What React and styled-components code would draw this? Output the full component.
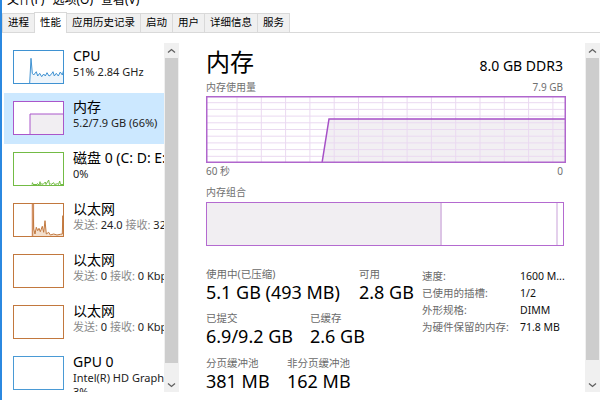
import React from 'react';
import styled, { createGlobalStyle } from 'styled-components';

const GlobalStyle = createGlobalStyle`
  *, *::before, *::after { box-sizing: border-box; }
  html, body { margin: 0; padding: 0; background: #fff; }
  body {
    font-family: "Noto Sans", "Noto Sans CJK SC", sans-serif;
    color: #000;
  }
`;

const Window = styled.div`
  width: 600px;
  height: 400px;
  border-left: 2px solid #2b88e0;
  background: #fff;
  overflow: hidden;
  display: flex;
  flex-direction: column;
`;

const MenuBar = styled.div`
  display: flex;
  gap: 8px;
  height: 13px;
  margin-top: -7px;
  padding-left: 5px;
  font-size: 12px;
  line-height: 13px;
`;

const TabBar = styled.div`
  display: flex;
  align-items: flex-end;
  height: 21px;
  margin-top: 6px;
  border-bottom: 1px solid #d9d9d9;
`;

const Tab = styled.div`
  height: ${p => (p.$active ? '21px' : '19px')};
  margin-bottom: ${p => (p.$active ? '-1px' : '0')};
  margin-right: -1px;
  padding: 0 5px;
  border: 1px solid #d9d9d9;
  border-bottom: none;
  background: ${p => (p.$active ? '#fff' : '#f0f0f0')};
  font-size: 10.5px;
  line-height: ${p => (p.$active ? '19px' : '17px')};
  color: #000;
  position: relative;
  z-index: ${p => (p.$active ? 1 : 0)};
`;

const Body = styled.div`
  flex: 1;
  min-height: 0;
  display: flex;
  padding-bottom: 8px;
`;

const LeftPane = styled.div`
  display: flex;
  margin-left: 2px;
  width: 180px;
`;

const List = styled.div`
  width: 160px;
  padding-top: 9px;
  overflow: hidden;
`;

const Item = styled.div`
  display: flex;
  gap: 9px;
  height: 51px;
  padding: 5px 0 0 9px;
  background: ${p => (p.$active ? '#cce8ff' : 'transparent')};
  white-space: nowrap;
  overflow: hidden;
`;

const ThumbSvg = styled.svg`
  flex-shrink: 0;
  margin-top: 3px;
  display: block;
`;

const ItemText = styled.div`
  display: flex;
  flex-direction: column;
`;

const ItemTitle = styled.div`
  font-size: 14px;
  line-height: 18px;
`;

const ItemSub = styled.div`
  font-size: 11px;
  line-height: 14px;
  color: #222;
`;

const Dim = styled.span`
  color: #8a8a8a;
`;

const Scroll = styled.div`
  width: 15px;
  margin-top: 10px;
  background: #f0f0f0;
  display: flex;
  flex-direction: column;
  flex-shrink: 0;
`;

const Arrow = styled.div`
  height: 15px;
  display: flex;
  align-items: center;
  justify-content: center;
`;

const Track = styled.div`
  flex: 1;
  display: flex;
  flex-direction: column;
  padding-bottom: ${p => p.$rest}px;
`;

const ScrollThumb = styled.div`
  flex: 1;
  margin: 0 1px;
  background: #cdcdcd;
`;

const RightPane = styled.div`
  flex: 1;
  display: flex;
  margin-left: 8px;
  min-width: 0;
`;

const Content = styled.div`
  flex: 1;
  padding: 14px 21px 0 14px;
  overflow: hidden;
`;

const Header = styled.div`
  display: flex;
  justify-content: space-between;
  align-items: baseline;
  height: 30px;
`;

const Title = styled.div`
  font-size: 24px;
  line-height: 30px;
`;

const HeaderInfo = styled.div`
  font-size: 14px;
  line-height: 18px;
  padding-right: 1px;
`;

const CaptionRow = styled.div`
  display: flex;
  justify-content: space-between;
  font-size: 10px;
  line-height: 14px;
  color: #707070;
  margin-top: ${p => p.$top}px;
  margin-bottom: ${p => p.$bottom}px;
  padding-right: 1px;
`;

const Bar = styled.div`
  display: flex;
  height: 44px;
  border: 1.5px solid #b46ad0;
`;

const Segment = styled.div`
  width: ${p => (p.$w ? `${p.$w}px` : 'auto')};
  flex: ${p => (p.$w ? '0 0 auto' : '1')};
  background: ${p => p.$bg};
  border-right: ${p => (p.$line ? `2px solid ${p.$line}` : 'none')};
`;

const StatsArea = styled.div`
  display: flex;
  margin-top: 21px;
`;

const StatsCol = styled.div`
  width: 216px;
  flex-shrink: 0;
`;

const StatRow = styled.div`
  display: flex;
  margin-bottom: ${p => p.$gap}px;
`;

const Stat = styled.div`
  width: ${p => (p.$w ? `${p.$w}px` : 'auto')};
  flex-shrink: 0;
`;

const StatLabel = styled.div`
  font-size: 10.5px;
  line-height: 14px;
  color: #6a6a6a;
  white-space: nowrap;
`;

const StatValue = styled.div`
  font-size: 18px;
  line-height: 22px;
  white-space: nowrap;
`;

const Table = styled.div`
  display: grid;
  grid-template-columns: 98px auto;
  margin-top: 1px;
  font-size: 10.5px;
  line-height: 17px;
  align-content: start;
`;

const Key = styled.div`
  color: #6a6a6a;
  white-space: nowrap;
`;

const Val = styled.div`
  color: #111;
  white-space: nowrap;
`;

function Chevron({ down }) {
  return (
    <svg width="9" height="6" viewBox="0 0 9 6">
      <polyline
        points={down ? '1,1.5 4.5,4.5 8,1.5' : '1,4.5 4.5,1.5 8,4.5'}
        fill="none"
        stroke="#606060"
        strokeWidth="1.3"
      />
    </svg>
  );
}

function Scrollbar({ rest }) {
  return (
    <Scroll>
      <Arrow><Chevron /></Arrow>
      <Track $rest={rest}>
        <ScrollThumb />
      </Track>
      <Arrow><Chevron down /></Arrow>
    </Scroll>
  );
}

function Thumb({ color, line, area, fill, band }) {
  return (
    <ThumbSvg width="51" height="34" viewBox="0 0 51 34">
      <rect x="0" y="0" width="51" height="34" fill="#fff" />
      {band && <rect x={band[0]} y="0" width={band[1]} height="34" fill="#f6d2c4" />}
      {area && <polygon points={area} fill={fill} />}
      {line && <polyline points={line} fill="none" stroke={color} strokeWidth="1" />}
      <rect x="0.5" y="0.5" width="50" height="33" fill="none" stroke={color} />
    </ThumbSvg>
  );
}

const cpuLine =
  '16.7,33 18,8.3 19.3,23.3 20.7,25 23.3,21.7 24.7,26 26.7,23.3 28.7,26.7 30.7,24 32.3,26 34,22.7 36,26 38,24.7 40,21.7 41.3,26 43.3,23.3 45.3,26 47.3,22 49.3,25 50.5,20.7';
const diskLine =
  '19,32.5 19.5,30.7 20,32.5 24,32.5 24.5,31.5 25,32.5 26.5,32.5 27,29.7 27.5,32.5 29,31.7 30,32.5 32.3,30 33,32.5 35.7,28 36.5,32.5 37.3,31.7 38,32.5 40.7,30.7 41.5,32.5 44.7,31.7 45.5,32.5 46.7,29 47.5,32.5 50.5,32.5';
const ethLine =
  '19.7,33 20,1 20.7,26 22,31 23.3,24.3 24.7,27.7 26,25.3 27.3,28.7 29.3,23.3 30.7,29.3 32,17.7 33.3,31 35.7,29.3 37.3,32 40.7,31 44,32 47.3,31.3 49.3,31 49.8,12.7 50.5,31';

const items = [
  { title: 'CPU', sub: '51% 2.84 GHz', color: '#3f92d2', line: cpuLine, area: `${cpuLine} 50.5,33 16.7,33`, fill: '#eef5fb' },
  { title: '内存', sub: '5.2/7.9 GB (66%)', color: '#aa56ca', active: true, line: '17,33 17,13 50.5,13', area: '17,33 17,13 50.5,13 50.5,33', fill: '#f1eef2' },
  { title: '磁盘 0 (C: D: E:)', sub: '0%', color: '#73bb45', line: diskLine },
  { title: '以太网', eth: ['24.0', '32.0 Kbps'], color: '#c2783e', line: ethLine, area: `${ethLine} 50.5,33 19.7,33`, fill: '#f3dfcd', band: [18.3, 3] },
  { title: '以太网', eth: ['0', '0 Kbps'], color: '#c2783e' },
  { title: '以太网', eth: ['0', '0 Kbps'], color: '#c2783e' },
  { title: 'GPU 0', sub: 'Intel(R) HD Graphics 4600', third: '3%', color: '#4a9ad5' },
];

function UsageGraph() {
  const vx = [];
  for (let x = 31; x < 360; x += 24.3) vx.push(x);
  const hy = [];
  for (let k = 1; k < 10; k++) hy.push(k * 6.7);
  return (
    <svg width="360" height="67" viewBox="0 0 360 67" style={{ display: 'block' }}>
      <polygon points="116,67 123,23 360,23 360,67" fill="#f2eff3" />
      {vx.map(x => (
        <line key={'v' + x} x1={x} y1="0" x2={x} y2="67" stroke="#ead9f1" strokeWidth="1" />
      ))}
      {hy.map(y => (
        <line key={'h' + y} x1="0" y1={y} x2="360" y2={y} stroke="#ead9f1" strokeWidth="1" />
      ))}
      <polyline points="116,67 123,23 359,23" fill="none" stroke="#a650c7" strokeWidth="1.5" />
      <rect x="0.75" y="0.75" width="358.5" height="65.5" fill="none" stroke="#b066cd" strokeWidth="1.5" />
    </svg>
  );
}

export default function App() {
  return (
    <>
      <GlobalStyle />
      <Window>
        <MenuBar>
          <span>文件(F)</span>
          <span>选项(O)</span>
          <span>查看(V)</span>
        </MenuBar>
        <TabBar>
          <Tab>进程</Tab>
          <Tab $active>性能</Tab>
          <Tab>应用历史记录</Tab>
          <Tab>启动</Tab>
          <Tab>用户</Tab>
          <Tab>详细信息</Tab>
          <Tab>服务</Tab>
        </TabBar>
        <Body>
          <LeftPane>
            <List>
              {items.map((it, i) => (
                <Item key={i} $active={it.active}>
                  <Thumb color={it.color} line={it.line} area={it.area} fill={it.fill} band={it.band} />
                  <ItemText>
                    <ItemTitle>{it.title}</ItemTitle>
                    {it.sub && <ItemSub>{it.sub}</ItemSub>}
                    {it.eth && (
                      <ItemSub>
                        <Dim>发送:</Dim> {it.eth[0]} <Dim>接收:</Dim> {it.eth[1]}
                      </ItemSub>
                    )}
                    {it.third && <ItemSub>{it.third}</ItemSub>}
                  </ItemText>
                </Item>
              ))}
            </List>
            <Scrollbar rest={14} />
          </LeftPane>
          <RightPane>
            <Content>
              <Header>
                <Title>内存</Title>
                <HeaderInfo>8.0 GB DDR3</HeaderInfo>
              </Header>
              <CaptionRow $top={3} $bottom={2}>
                <span>内存使用量</span>
                <span>7.9 GB</span>
              </CaptionRow>
              <UsageGraph />
              <CaptionRow $top={1} $bottom={0}>
                <span>60 秒</span>
                <span>0</span>
              </CaptionRow>
              <CaptionRow $top={7} $bottom={3}>
                <span>内存组合</span>
              </CaptionRow>
              <Bar>
                <Segment $w={235} $bg="#f1eef2" $line="#dcc4e5" />
                <Segment $bg="#fff" $line="#e4d0ec" />
                <Segment $w={5} $bg="#fff" />
              </Bar>
              <StatsArea>
                <StatsCol>
                  <StatRow $gap={8}>
                    <Stat $w={153}>
                      <StatLabel>使用中(已压缩)</StatLabel>
                      <StatValue>5.1 GB (493 MB)</StatValue>
                    </Stat>
                    <Stat>
                      <StatLabel>可用</StatLabel>
                      <StatValue>2.8 GB</StatValue>
                    </Stat>
                  </StatRow>
                  <StatRow $gap={9}>
                    <Stat $w={104}>
                      <StatLabel>已提交</StatLabel>
                      <StatValue>6.9/9.2 GB</StatValue>
                    </Stat>
                    <Stat>
                      <StatLabel>已缓存</StatLabel>
                      <StatValue>2.6 GB</StatValue>
                    </Stat>
                  </StatRow>
                  <StatRow $gap={0}>
                    <Stat $w={81}>
                      <StatLabel>分页缓冲池</StatLabel>
                      <StatValue>381 MB</StatValue>
                    </Stat>
                    <Stat>
                      <StatLabel>非分页缓冲池</StatLabel>
                      <StatValue>162 MB</StatValue>
                    </Stat>
                  </StatRow>
                </StatsCol>
                <Table>
                  <Key>速度:</Key>
                  <Val>1600 M...</Val>
                  <Key>已使用的插槽:</Key>
                  <Val>1/2</Val>
                  <Key>外形规格:</Key>
                  <Val>DIMM</Val>
                  <Key>为硬件保留的内存:</Key>
                  <Val>71.8 MB</Val>
                </Table>
              </StatsArea>
            </Content>
            <Scrollbar rest={17} />
          </RightPane>
        </Body>
      </Window>
    </>
  );
}
